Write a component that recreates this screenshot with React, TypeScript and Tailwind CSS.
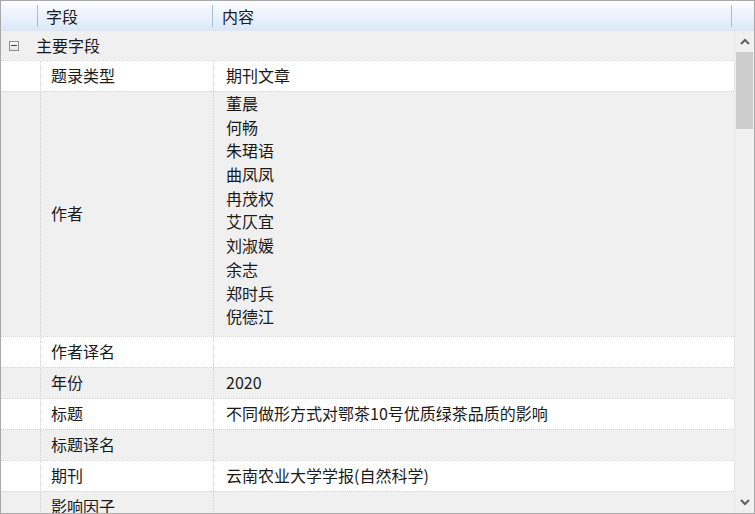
const authors = ["董晨", "何畅", "朱珺语", "曲凤凤", "冉茂权", "艾仄宜", "刘淑媛", "余志", "郑时兵", "倪德江"];

type Row = { field: string; value?: string; lines?: string[] };

const rows: Row[] = [
  { field: "题录类型", value: "期刊文章" },
  { field: "作者", lines: authors },
  { field: "作者译名" },
  { field: "年份", value: "2020" },
  { field: "标题", value: "不同做形方式对鄂茶10号优质绿茶品质的影响" },
  { field: "标题译名" },
  { field: "期刊", value: "云南农业大学学报(自然科学)" },
  { field: "影响因子" },
];

const font = { fontFamily: '"Noto Sans CJK SC", "Noto Sans", sans-serif' };

export default function App() {
  return (
    <div
      className="h-[514px] w-[755px] overflow-hidden border border-[#a9a9a9] bg-white text-[16px] text-[#1a1a1a]"
      style={font}
    >
      {/* header */}
      <div className="flex h-[30px] items-stretch bg-[linear-gradient(180deg,#fcfdff_0%,#e9f1fc_55%,#dae7f8_100%)]">
        <div className="flex w-[37px] items-center justify-end py-[4px]">
          <div className="h-full w-px bg-[#a8bcd6]" />
        </div>
        <div className="flex w-[175px] items-center py-[4px]">
          <span className="flex-1 pl-[8px] leading-none">字段</span>
          <div className="h-full w-px bg-[#a8bcd6]" />
        </div>
        <div className="flex flex-1 items-center py-[4px]">
          <span className="flex-1 pl-[9px] leading-none">内容</span>
          <div className="h-full w-px bg-[#a8bcd6]" />
        </div>
        <div className="w-[22px]" />
      </div>

      <div className="flex h-[482px]">
        {/* grid body */}
        <div className="flex flex-1 flex-col">
          <div className="flex h-[29px] shrink-0 items-center bg-[#f0f0f0]">
            <div className="flex w-[35px] justify-center pr-[12px] pl-[2px]">
              <div className="flex h-[10px] w-[10px] items-center justify-center border border-[#8e8f8f] bg-[linear-gradient(180deg,#ffffff,#e4e4e4)]">
                <div className="h-px w-[6px] bg-[#404040]" />
              </div>
            </div>
            <span className="pb-[2px]">主要字段</span>
          </div>
          {rows.map((r, i) => (
            <div
              key={r.field}
              className={
                "flex shrink-0 border-t border-dotted border-[#d4d4d4] " +
                (i % 2 === 0 ? "bg-white" : "bg-[#f0f0f0]") +
                (r.lines ? " h-[245px]" : " h-[31px]")
              }
            >
              <div className="w-[39px] shrink-0" />
              <div className="flex w-[174px] shrink-0 items-center border-l border-r border-dotted border-[#d4d4d4] pb-[2px] pl-[10px]">
                {r.field}
              </div>
              {r.lines ? (
                <div className="flex flex-1 flex-col pl-[12px]">
                  {r.lines.map((a) => (
                    <div key={a} className="h-[23.7px] leading-[23.7px]">
                      {a}
                    </div>
                  ))}
                </div>
              ) : (
                <div className="flex flex-1 items-center pb-[2px] pl-[12px]">{r.value ?? ""}</div>
              )}
            </div>
          ))}
        </div>

        {/* scrollbar */}
        <div className="flex w-[20px] shrink-0 flex-col items-center border-l border-[#e6e6e6] bg-[#f0f0f0]">
          <div className="flex h-[21px] w-full items-center justify-center">
            <svg width="10" height="7" viewBox="0 0 10 7">
              <path d="M1 6 L5 2 L9 6" fill="none" stroke="#606060" strokeWidth="2" />
            </svg>
          </div>
          <div className="h-[77px] w-[17px] bg-[#cdcdcd]" />
          <div className="flex-1" />
          <div className="flex h-[21px] w-full items-center justify-center">
            <svg width="10" height="7" viewBox="0 0 10 7">
              <path d="M1 1 L5 5 L9 1" fill="none" stroke="#606060" strokeWidth="2" />
            </svg>
          </div>
        </div>
      </div>
    </div>
  );
}
